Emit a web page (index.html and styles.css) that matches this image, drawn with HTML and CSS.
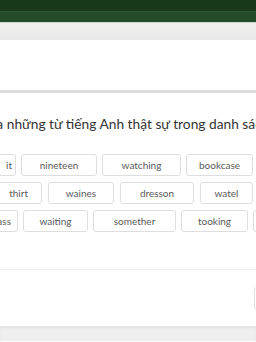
FILE: index.html
```html
<!DOCTYPE html>
<html lang="vi">

<head>
    <meta charset="UTF-8">
    <meta name="viewport" content="width=device-width, initial-scale=1.0">
    <title>Bài tập</title>
    <link rel="stylesheet" href="styles.css">
</head>

<body>
    <div class="topbar"></div>
    <div class="subbar"></div>
    <div class="toolbar"></div>
    <div class="panel"></div>
    <div class="quiz">
        <p class="question">Hãy chọn ra những từ tiếng Anh thật sự trong danh sách</p>
        <div class="words">
            <div class="row row1">
                <button class="word cut">it</button>
                <button class="word">nineteen</button>
                <button class="word">watching</button>
                <button class="word">bookcase</button>
            </div>
            <div class="row row2">
                <button class="word cut">thirt</button>
                <button class="word">waines</button>
                <button class="word">dresson</button>
                <button class="word">watel</button>
            </div>
            <div class="row row3">
                <button class="word cut">glass</button>
                <button class="word">waiting</button>
                <button class="word">somether</button>
                <button class="word">tooking</button>
                <button class="word">kitchen</button>
            </div>
        </div>
    </div>
    <div class="actions">
        <button class="next"></button>
    </div>
    <div class="footer"></div>
</body>

</html>
```

FILE: styles.css
```css
* {
    box-sizing: border-box;
}

body {
    margin: 0;
    width: 256px;
    height: 342px;
    overflow: hidden;
    background-color: #fff;
    font-family: Lato, "Open Sans", "Liberation Sans", sans-serif;
}

.topbar {
    height: 11px;
    background-color: #183a1b;
}

.subbar {
    height: 12px;
    background-color: #244c2a;
    border-top: 1px solid #2d5a33;
    border-bottom: 1px solid #c9d6c9;
}

.toolbar {
    height: 17px;
    background: linear-gradient(#f0f0ee, #e8e8e8);
}

.panel {
    height: 53px;
    border-bottom: 3px solid #dcdcdc;
}

.quiz {
    height: 177px;
    border-bottom: 1px solid #eeeeee;
}

.question {
    margin: 0 0 0 -69px;
    padding-top: 22px;
    height: 61px;
    white-space: nowrap;
    font-size: 13.75px;
    color: #333;
}

.words {
    display: flex;
    flex-direction: column;
    gap: 6px;
}

.row {
    display: grid;
    gap: 5px;
    height: 22px;
}

.row1 {
    margin-left: -44px;
    grid-template-columns: 60px 76px 79px 67px;
}

.row2 {
    margin-left: -18px;
    gap: 6px;
    grid-template-columns: 60px 66px 74px 53px;
}

.row3 {
    margin-left: -42px;
    grid-template-columns: 60px 65px 83px 67px 60px;
}

.word {
    height: 22px;
    padding: 0;
    border: 1px solid #dedede;
    border-radius: 3px;
    background-color: #fff;
    font-family: Lato, "Open Sans", "Liberation Sans", sans-serif;
    font-size: 10px;
    color: #5a5a5a;
    white-space: nowrap;
    overflow: hidden;
}

.cut {
    text-align: right;
    padding-right: 3px;
}

.row2 .cut {
    padding-right: 13px;
}

.row3 .cut {
    padding-right: 6px;
}

.actions {
    height: 56px;
    padding-top: 17px;
}

.next {
    display: block;
    margin-left: 254px;
    width: 60px;
    height: 23px;
    border: 1px solid #dedede;
    border-radius: 3px;
    background-color: #fff;
}

.footer {
    height: 15px;
    background-color: #eeeeee;
    box-shadow: inset 0 2px 2px #e4e4e4;
}
```
